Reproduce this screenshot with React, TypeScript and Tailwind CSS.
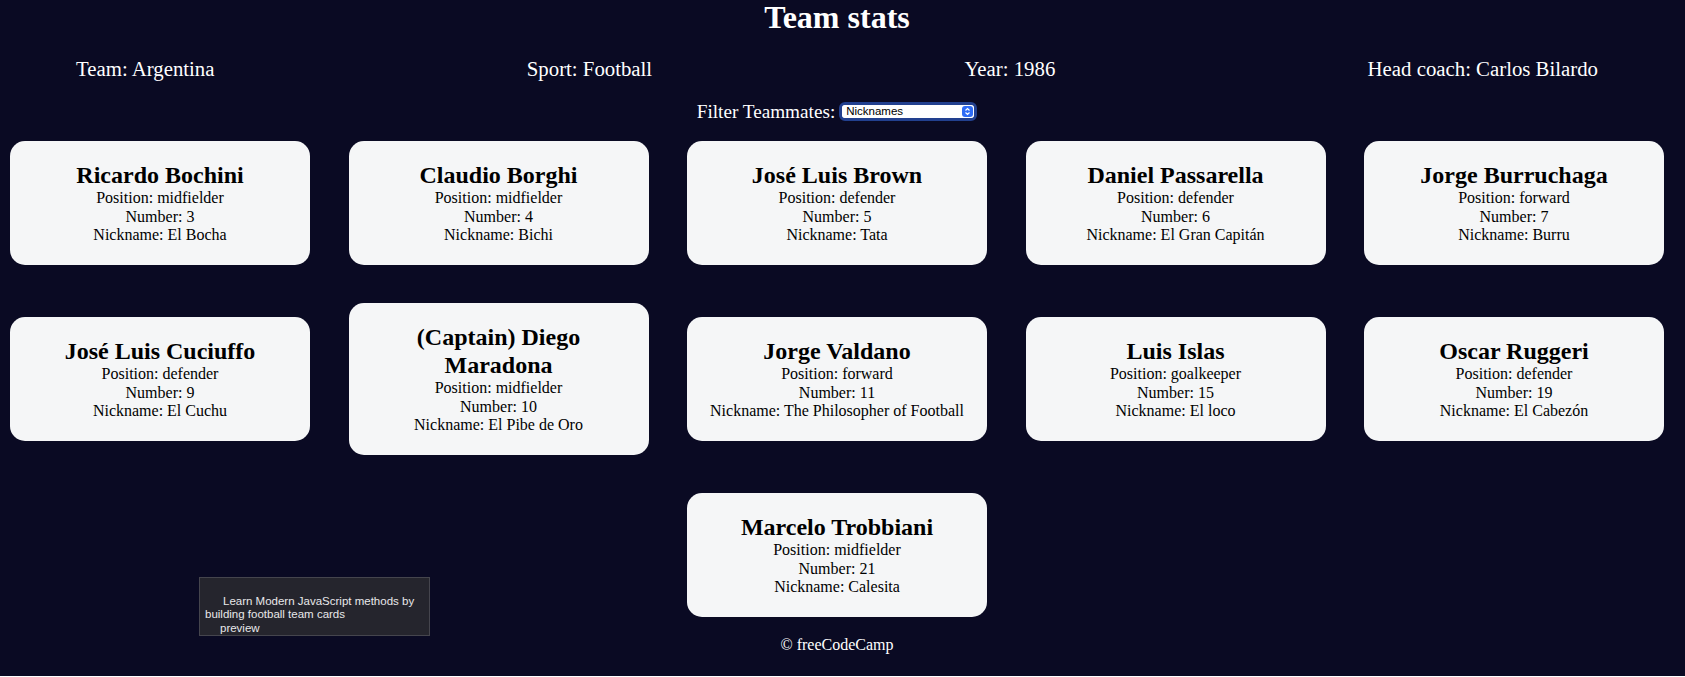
import { useState } from 'react';

interface Player {
  name: string;
  position: 'forward' | 'midfielder' | 'defender' | 'goalkeeper';
  number: number;
  isCaptain: boolean;
  nickname: string | null;
}

const players: Player[] = [
  { name: 'Ricardo Bochini', position: 'midfielder', number: 3, isCaptain: false, nickname: 'El Bocha' },
  { name: 'Claudio Borghi', position: 'midfielder', number: 4, isCaptain: false, nickname: 'Bichi' },
  { name: 'José Luis Brown', position: 'defender', number: 5, isCaptain: false, nickname: 'Tata' },
  { name: 'Daniel Passarella', position: 'defender', number: 6, isCaptain: false, nickname: 'El Gran Capitán' },
  { name: 'Jorge Burruchaga', position: 'forward', number: 7, isCaptain: false, nickname: 'Burru' },
  { name: 'José Luis Cuciuffo', position: 'defender', number: 9, isCaptain: false, nickname: 'El Cuchu' },
  { name: 'Diego Maradona', position: 'midfielder', number: 10, isCaptain: true, nickname: 'El Pibe de Oro' },
  { name: 'Jorge Valdano', position: 'forward', number: 11, isCaptain: false, nickname: 'The Philosopher of Football' },
  { name: 'Luis Islas', position: 'goalkeeper', number: 15, isCaptain: false, nickname: 'El loco' },
  { name: 'Oscar Ruggeri', position: 'defender', number: 19, isCaptain: false, nickname: 'El Cabezón' },
  { name: 'Marcelo Trobbiani', position: 'midfielder', number: 21, isCaptain: false, nickname: 'Calesita' },
];

const PlayerCard = ({ player }: { player: Player }) => (
  <div className="w-[300px] rounded-[15px] bg-[#f5f6f7] p-[1.3rem] text-black">
    <h2 className="text-[24px] font-bold leading-[1.15]">
      {`${player.isCaptain ? '(Captain) ' : ''}${player.name}`}
    </h2>
    <p className="leading-[1.15]">Position: {player.position}</p>
    <p className="leading-[1.15]">Number: {player.number}</p>
    <p className="leading-[1.15]">Nickname: {player.nickname !== null ? player.nickname : 'N/A'}</p>
  </div>
);

const App = () => {
  const [filter, setFilter] = useState('nickname');

  const visible = players.filter((p) => {
    if (filter === 'all') return true;
    if (filter === 'nickname') return p.nickname !== null;
    return p.position === filter;
  });

  return (
    <div className="relative min-h-screen bg-[#0a0a23] text-center font-['Liberation_Serif',serif]">
      <div className="w-[1674px]">
        {/* Header */}
        <header className="text-white">
          <h1 className="-mt-px mb-[21px] text-[32px] font-bold leading-[1.15]">Team stats</h1>
          <div className="flex justify-between px-[76px] text-[20.8px] leading-[1.15]">
            <p>Team: Argentina</p>
            <p>Sport: Football</p>
            <p>Year: 1986</p>
            <p>Head coach: Carlos Bilardo</p>
          </div>
        </header>

        <main>
          {/* Filter */}
          <div className="mt-5 flex items-center justify-center gap-[4px]">
            <label htmlFor="players" className="text-[19.2px] leading-[1.15] text-white">
              Filter Teammates:
            </label>
            <div className="relative flex h-[19px] w-[138px] items-center rounded-[6px] border-[3px] border-[#22408f] bg-white">
              <select
                id="players"
                value={filter}
                onChange={(e) => setFilter(e.target.value)}
                className="h-full w-full appearance-none rounded-[4px] bg-white pl-[4px] text-left font-['Liberation_Sans',sans-serif] text-[11.5px] leading-none text-black outline-none"
              >
                <option value="all">All Players</option>
                <option value="nickname">Nicknames</option>
                <option value="forward">Position Forward</option>
                <option value="midfielder">Position Midfielder</option>
                <option value="defender">Position Defender</option>
                <option value="goalkeeper">Position Goalkeeper</option>
              </select>
              <span className="pointer-events-none absolute right-[1px] top-[1px] flex h-[11px] w-[11px] items-center justify-center rounded-[3px] bg-[#2f6cf5]">
                <svg className="h-[9px] w-[7px]" viewBox="0 0 7 9" fill="none" stroke="white" strokeWidth={1.2}>
                  <path d="M1.5 3.5 3.5 1.5 5.5 3.5" />
                  <path d="M1.5 5.5 3.5 7.5 5.5 5.5" />
                </svg>
              </span>
            </div>
          </div>

          {/* Player cards */}
          <div className="mt-[18px] flex flex-wrap items-center justify-center gap-x-[38.5px] gap-y-[38px]">
            {visible.map((player) => (
              <PlayerCard key={player.number} player={player} />
            ))}
          </div>
        </main>

        <footer className="mt-[18.5px] leading-[1.15] text-white">© freeCodeCamp</footer>
      </div>

      {/* Preview tooltip */}
      <div className="absolute left-[199px] top-[578px] h-[59px] w-[231px] border border-[#45454d] bg-[#25252d] px-[5px] pt-[3px] text-left font-['Liberation_Sans',sans-serif] text-[11.5px] leading-[13.5px] text-[#e8e8ea]">
        <div>&nbsp;</div>
        <div className="pl-[18px]">Learn Modern JavaScript methods by</div>
        <div>building football team cards</div>
        <div className="pl-[15px]">preview</div>
      </div>
    </div>
  );
};

export default App;
